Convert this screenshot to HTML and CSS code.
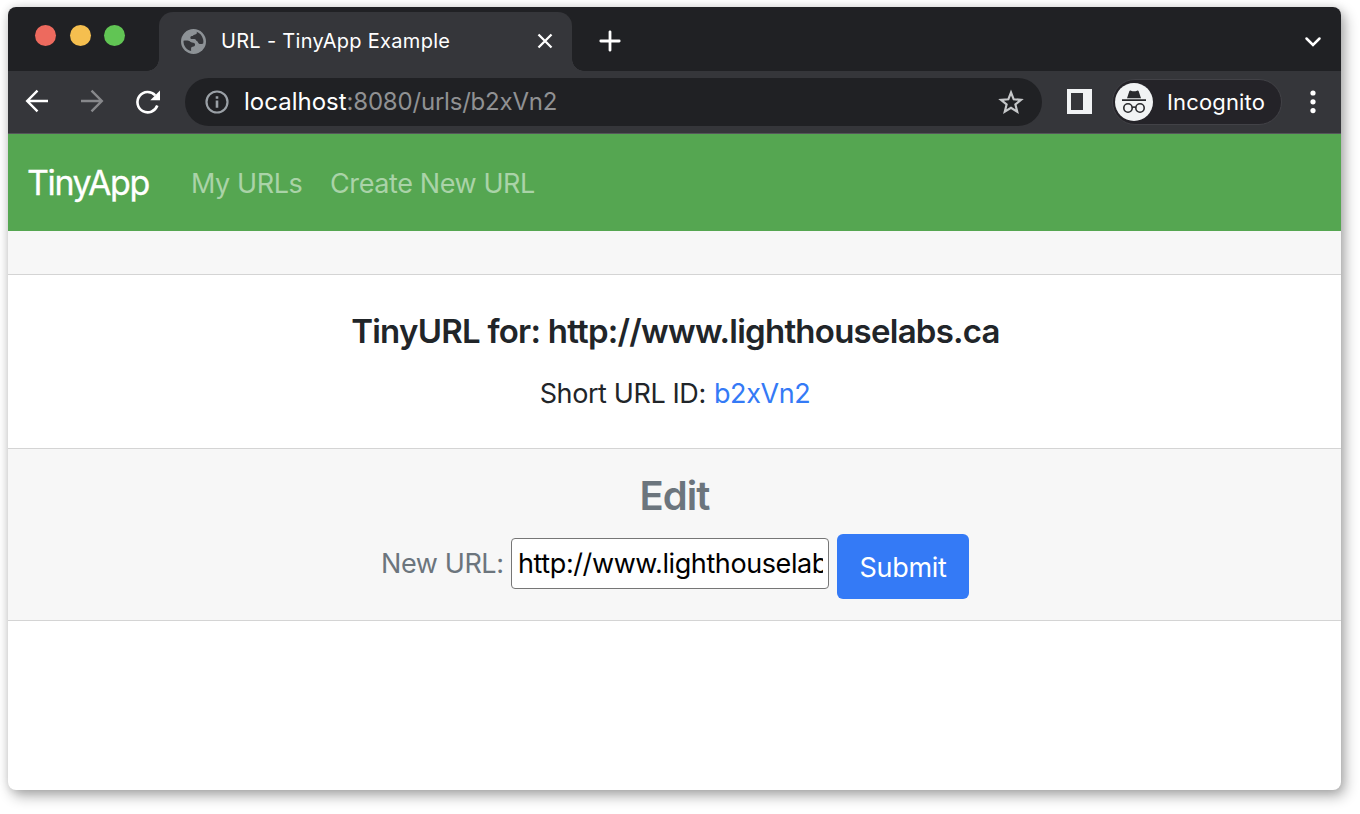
FILE: index.html
```html
<!DOCTYPE html>
<html lang="en">
<head>
<meta charset="utf-8">
<title>URL - TinyApp Example</title>
<link rel="stylesheet" href="styles.css">
</head>
<body>
<div class="window">
  <div class="tabstrip">
    <div class="lights"><span class="light red"></span><span class="light yellow"></span><span class="light green"></span></div>
    <div class="tab">
      <svg class="globe" viewBox="0 0 24 24"><circle cx="12" cy="12" r="12" fill="#8d9296"/><path d="M15 2.600c.8 1.400-.2 2.600-2 2.800-1.400.2-1.200 1.200-2.500 1.400-1.300.2-1.800 1-1.300 2.200.4 1 2.200.6 3.600.7 1.600.1 1.300 1.500 2.300 1.900 1.400.5 1 1.900 2.200 2.500 1.200.5 2.700.3 4-.3.300-1.200.2-2.800-.1-3.900C20.300 6.300 18.200 3.700 15 2.600z M2.400 11.300c2.500-.2 5-.4 6.500.9 1.100 1 2.400.8 3.700 1.300 1.300.6 1.100 2.400.2 3.100-.9.600-2.500.3-3 1.400-.3.800 0 1.900-.1 3.200C5.400 20.200 2.200 16.400 2.400 11.300z" fill="#35363a"/></svg>
      <span class="tab-title">URL - TinyApp Example</span>
      <svg class="close" viewBox="0 0 16 16"><path d="M1.500 1.500l13 13M14.500 1.500l-13 13" stroke="#fff" stroke-width="2.300" fill="none"/></svg>
    </div>
    <svg class="plus" viewBox="0 0 22 22"><path d="M11 1.800v18.400M1.800 11h18.400" stroke="#fff" stroke-width="2.800" stroke-linecap="round"/></svg>
    <svg class="chevron" viewBox="0 0 18 12"><path d="M2.500 2.500L9 9l6.500-6.500" stroke="#fff" stroke-width="2.500" fill="none" stroke-linecap="round"/></svg>
  </div>
  <div class="toolbar">
    <svg class="nav-icon" viewBox="0 0 24 24"><path d="M23 12H2M12.500 1.700L2.200 12l10.300 10.300" stroke="#fff" stroke-width="2.400" fill="none"/></svg>
    <svg class="nav-icon forward" viewBox="0 0 24 24"><path d="M1 12h21M11.500 1.700L21.800 12 11.500 22.300" stroke="#87888b" stroke-width="2.400" fill="none"/></svg>
    <svg class="reload" viewBox="0 0 26 26"><path d="M22.300 16.500A10.200 10.200 0 1 1 20.200 6.300" stroke="#fff" stroke-width="2.600" fill="none"/><path d="M25 1.500v9.700h-9.700z" fill="#fff"/></svg>
    <div class="address">
      <svg class="info" viewBox="0 0 24 24"><circle cx="12" cy="12" r="10.500" stroke="#9aa0a6" stroke-width="2.200" fill="none"/><path d="M12 10.500v7.200M12 6.200v2.600" stroke="#9aa0a6" stroke-width="2.600"/></svg>
      <span class="url"><span class="host">localhost</span><span class="path">:8080/urls/b2xVn2</span></span>
      <svg class="star" viewBox="0 0 26 26"><path d="M13 3.500l2.700 6.800 7.300.5-5.600 4.700 1.800 7.100L13 18.700l-6.200 3.900 1.800-7.100L3 10.800l7.300-.5z" stroke="#c5c7c9" stroke-width="2.200" fill="none"/></svg>
    </div>
    <svg class="panel" viewBox="0 0 25 25"><path fill-rule="evenodd" d="M0 0h25v25H0zM4 4v17h12V4z" fill="#f1f3f4"/></svg>
    <div class="profile">
      <svg class="spy" viewBox="0 0 38 38"><circle cx="19" cy="19" r="19" fill="#f1f3f4"/><path d="M14.300 8.300c.3-.8 1-.9 1.700-.6 2 .8 4 .8 6 0 .7-.3 1.400-.2 1.700.6l2.300 7H12z" fill="#292a2d"/><path d="M7 17.200h24" stroke="#292a2d" stroke-width="1.800"/><g fill="none" stroke="#292a2d" stroke-width="1.600"><circle cx="13" cy="25" r="4.200"/><circle cx="25" cy="25" r="4.200"/><path d="M17 24.700q2-1.300 4 0"/></g></svg>
      <span class="profile-name">Incognito</span>
    </div>
    <svg class="dots" viewBox="0 0 6 24"><g fill="#fff"><circle cx="3" cy="3" r="2.600"/><circle cx="3" cy="11.800" r="2.600"/><circle cx="3" cy="20.600" r="2.600"/></g></svg>
  </div>
  <nav class="navbar">
    <a class="brand">TinyApp</a>
    <a class="link my">My URLs</a>
    <a class="link create">Create New URL</a>
  </nav>
  <div class="band"></div>
  <main class="card-body">
    <h5 class="heading">TinyURL for: http://www.lighthouselabs.ca</h5>
    <p class="short">Short URL ID: <a class="short-link">b2xVn2</a></p>
  </main>
  <section class="edit">
    <h3 class="edit-title">Edit</h3>
    <form class="form">
      <label class="label" for="longURL">New URL:</label>
      <input class="field" id="longURL" type="text" value="http://www.lighthouselabs.ca">
      <button class="submit" type="button">Submit</button>
    </form>
  </section>
</div>
</body>
</html>
```
FILE: styles.css
```css
* { box-sizing: border-box; }
body { margin: 0; height: 814px; padding: 7px 0 0 8px; background: #fff; font-family: Inter, sans-serif; overflow: hidden; }
svg { display: block; flex: none; }
.window { width: 1333px; height: 783px; border-radius: 8px; overflow: hidden; background: #fff; box-shadow: 0 0 10px rgba(0,0,0,.12), 4px 6px 14px rgba(0,0,0,.32); }
.tabstrip { height: 63.500px; background: #202124; display: flex; align-items: center; padding-right: 19px; }
.lights { display: flex; gap: 13.500px; padding-left: 27px; width: 151px; margin-top: -7px; }
.light { width: 21px; height: 21px; border-radius: 50%; }
.red { background: #ed6a5e; }
.yellow { background: #f5bf4f; }
.green { background: #61c554; }
.tab { position: relative; align-self: flex-end; width: 413px; height: 58.500px; background: #35363a; border-radius: 14px 14px 0 0; display: flex; align-items: center; padding: 0 19px 0 22px; }
.tab::before, .tab::after { content: ""; position: absolute; bottom: 0; width: 12px; height: 12px; }
.tab::before { left: -12px; background: radial-gradient(circle at 0 0, #202124 11.500px, #35363a 12px); }
.tab::after { right: -12px; background: radial-gradient(circle at 100% 0, #202124 11.500px, #35363a 12px); }
.globe { width: 25px; height: 25px; }
.tab-title { margin-left: 15px; font-size: 20px; letter-spacing: .3px; color: #fff; white-space: nowrap; }
.close { width: 16px; height: 16px; margin-left: auto; }
.plus { width: 22px; height: 22px; margin: 5px 0 0 27px; }
.chevron { width: 18px; height: 12px; margin: 6px 0 0 auto; }
.toolbar { height: 63.500px; background: #35363a; border-bottom: 1px solid #55565a; display: flex; align-items: center; padding-left: 17px; }
.nav-icon { width: 24px; height: 24px; margin-bottom: 1px; }
.forward { margin-left: 31px; }
.reload { width: 26px; height: 26px; margin-left: 31px; }
.address { width: 857px; height: 48px; margin-left: 24px; border-radius: 24px; background: #202124; display: flex; align-items: center; padding: 0 18px 0 20px; }
.info { width: 24px; height: 24px; }
.url { margin-left: 15px; font-size: 24px; white-space: nowrap; }
.host { color: #fff; }
.path { color: #909193; letter-spacing: -.2px; }
.star { width: 26px; height: 26px; margin-left: auto; }
.panel { width: 25px; height: 25px; margin-left: 25px; }
.profile { width: 170px; height: 46px; margin-left: 20px; border-radius: 23px; border: 1.500px solid #424247; background: #242328; display: flex; align-items: center; padding-left: 2px; }
.spy { width: 38px; height: 38px; }
.profile-name { font-size: 22px; letter-spacing: .15px; color: #fff; margin-left: 14px; }
.dots { width: 6px; height: 24px; margin-left: 28px; }
.navbar { height: 97px; background: #55a651; display: flex; align-items: center; padding: 2px 0 0 19px; white-space: nowrap; }
.brand { width: 122px; margin-top: -2px; font-size: 34px; letter-spacing: -1.4px; color: #fff; -webkit-text-stroke: .3px #fff; }
.link { font-size: 27px; letter-spacing: -.4px; color: #aad3a8; }
.my { margin-left: 42px; width: 111px; }
.create { margin-left: 28px; }
.band { height: 44px; background: #f7f7f7; border-bottom: 1px solid #d4d4d4; }
.card-body { height: 173px; text-align: center; color: #212529; padding-top: 36px; }
.heading { margin: 0 -2px 0 0; font-size: 33px; line-height: 40px; font-weight: 560; letter-spacing: -.75px; white-space: nowrap; }
.short { margin: 22px -1px 0 0; font-size: 27px; line-height: 42px; letter-spacing: -.4px; white-space: nowrap; }
.short-link { color: #347af6; margin-left: 1px; }
.edit { height: 173px; background: #f7f7f7; border-top: 1px solid #d4d4d4; border-bottom: 1px solid #d4d4d4; color: #6c757d; text-align: center; padding-top: 22px; }
.edit-title { margin: 0; font-size: 40px; line-height: 50px; font-weight: 600; letter-spacing: -.9px; }
.form { display: flex; align-items: flex-start; padding-left: 373px; margin: 13px 0 0; }
.label { width: 122px; font-size: 27px; line-height: 33px; letter-spacing: -.4px; margin-top: 13px; text-align: left; white-space: nowrap; }
.field { margin: 4px 0 0 8px; width: 318px; height: 51px; border: 1.500px solid #767676; border-radius: 4px; background: #fff; padding: 0 5px 0 6px; font: 27px Inter, sans-serif; letter-spacing: -.4px; color: #000; outline: 0; }
.submit { width: 132px; height: 65px; margin: 0 0 0 8px; padding: 2px 0 0; border: 0; border-radius: 6px; background: #347af6; color: #fff; font: 27px Inter, sans-serif; letter-spacing: -.3px; }
```
